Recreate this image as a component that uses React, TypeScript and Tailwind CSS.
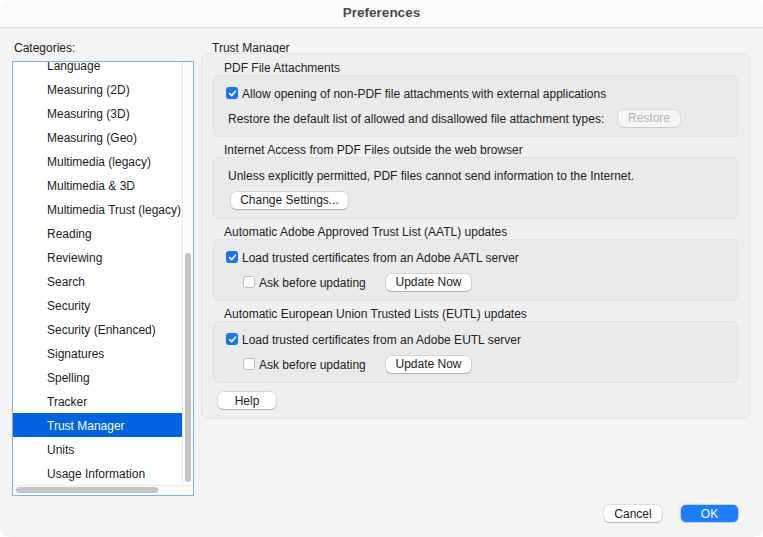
import React from 'react';

const categories = [
  'Language',
  'Measuring (2D)',
  'Measuring (3D)',
  'Measuring (Geo)',
  'Multimedia (legacy)',
  'Multimedia & 3D',
  'Multimedia Trust (legacy)',
  'Reading',
  'Reviewing',
  'Search',
  'Security',
  'Security (Enhanced)',
  'Signatures',
  'Spelling',
  'Tracker',
  'Trust Manager',
  'Units',
  'Usage Information',
];

const font = { fontFamily: '"Liberation Sans", Arial, sans-serif' };

const Checkbox: React.FC<{ checked?: boolean }> = ({ checked }) =>
  checked ? (
    <span className="w-[12px] h-[12px] rounded-[3px] bg-[#1a73f0] flex items-center justify-center shrink-0">
      <svg width="9" height="9" viewBox="0 0 10 10">
        <path d="M1.8 5.2 L4 7.4 L8.3 2.4" fill="none" stroke="white" strokeWidth="1.8" strokeLinecap="round" strokeLinejoin="round" />
      </svg>
    </span>
  ) : (
    <span className="w-[12px] h-[12px] rounded-[3px] bg-white border border-[#bdbdbd] shrink-0"></span>
  );

const Button: React.FC<{ label: string; w: string; disabled?: boolean; primary?: boolean }> = ({ label, w, disabled, primary }) => (
  <div
    className={`${w} h-[17px] rounded-[5px] flex items-center justify-center text-[12px] shrink-0 ${
      primary
        ? 'bg-[#1b7ffb] text-white shadow-[0_0_0_0.5px_rgba(0,80,200,0.4)]'
        : disabled
        ? 'bg-[#f6f6f6] text-[#b3b3b3] shadow-[0_0_0_0.5px_rgba(0,0,0,0.1),0_0.5px_1px_rgba(0,0,0,0.08)]'
        : 'bg-white text-[#222] shadow-[0_0_0_0.5px_rgba(0,0,0,0.18),0_1px_1px_rgba(0,0,0,0.18)]'
    }`}
  >
    {label}
  </div>
);

const Section: React.FC<{ title: string; children: React.ReactNode }> = ({ title, children }) => (
  <div className="flex flex-col">
    <div className="h-[20px] flex items-end pl-[11px]">
      <span className="leading-[13px] text-[12px] text-[#222]">{title}</span>
    </div>
    <div className="h-[62px] rounded-[6px] bg-[#eaeaea] border border-[#e2e2e2] flex flex-col pt-[7px] gap-[5px]">
      {children}
    </div>
  </div>
);

export default function App() {
  return (
    <div className="w-[763px] h-[537px] bg-white overflow-hidden" style={font}>
      <div className="w-full h-full rounded-[10px] bg-[#f4f4f4] flex flex-col overflow-hidden">
        {/* Title bar */}
        <div className="h-[28px] shrink-0 bg-[#fbfbfb] border-b border-[#dadada] flex items-center justify-center">
          <span className="text-[13.5px] font-bold text-[#4a4a4a]">Preferences</span>
        </div>

        {/* Body */}
        <div className="flex pl-[12px] gap-[7px]">
          {/* Categories */}
          <div className="w-[182px] flex flex-col pt-[13px]">
            <div className="h-[14px] leading-[14px] text-[12px] text-[#222] pl-[2px]">Categories:</div>
            <div className="mt-[6px] h-[435px] border border-[#86ade9] bg-white flex flex-col overflow-hidden">
              <div className="flex h-[423px]">
                <div className="flex-1 overflow-hidden">
                  <div className="mt-[-9px] flex flex-col">
                    {categories.map((c) => (
                      <div
                        key={c}
                        className={`h-[24px] shrink-0 flex items-center pt-[2px] pl-[34px] text-[12px] ${
                          c === 'Trust Manager' ? 'bg-[#0064e1] text-white' : 'text-[#1c1c1c]'
                        }`}
                      >
                        {c}
                      </div>
                    ))}
                  </div>
                </div>
                <div className="w-[11px] border-l border-[#ebebeb] bg-[#fbfbfb] pt-[191px] pl-[2px]">
                  <div className="w-[6px] h-[229px] rounded-full bg-[#c3c3c3]"></div>
                </div>
              </div>
              <div className="h-[10px] border-t border-[#ebebeb] bg-[#fbfbfb] pl-[3px] pt-[1px]">
                <div className="w-[142px] h-[6px] rounded-full bg-[#c3c3c3]"></div>
              </div>
            </div>
          </div>

          {/* Trust Manager panel */}
          <div className="w-[549px] flex flex-col pt-[13px]">
            <div className="h-[14px] leading-[14px] text-[12px] text-[#222] pl-[11px]">Trust Manager</div>
            <div className="mt-[-2px] h-[366px] rounded-[7px] bg-[#f0f0f0] border border-[#e4e4e4] px-[11px] pt-[1px] flex flex-col">
              <Section title="PDF File Attachments">
                <div className="h-[20px] flex items-center pl-[12px] gap-[4px] text-[12px] text-[#222]">
                  <Checkbox checked />
                  <span className="pt-[2px]">Allow opening of non-PDF file attachments with external applications</span>
                </div>
                <div className="h-[20px] flex items-center pl-[14px] text-[12px] text-[#222]">
                  <span className="w-[390px] pt-[2px]">Restore the default list of allowed and disallowed file attachment types:</span>
                  <Button label="Restore" w="w-[62px]" disabled />
                </div>
              </Section>
              <Section title="Internet Access from PDF Files outside the web browser">
                <div className="h-[20px] flex items-center pl-[14px] text-[12px] text-[#222]">
                  <span className="pt-[2px]">Unless explicitly permitted, PDF files cannot send information to the Internet.</span>
                </div>
                <div className="h-[20px] flex items-center pl-[17px]">
                  <Button label="Change Settings..." w="w-[117px]" />
                </div>
              </Section>
              <Section title="Automatic Adobe Approved Trust List (AATL) updates">
                <div className="h-[20px] flex items-center pl-[12px] gap-[4px] text-[12px] text-[#222]">
                  <Checkbox checked />
                  <span className="pt-[2px]">Load trusted certificates from an Adobe AATL server</span>
                </div>
                <div className="h-[20px] flex items-center pl-[29px] text-[12px] text-[#222]">
                  <Checkbox />
                  <span className="ml-[4px] w-[127px] pt-[2px]">Ask before updating</span>
                  <Button label="Update Now" w="w-[85px]" />
                </div>
              </Section>
              <Section title="Automatic European Union Trusted Lists (EUTL) updates">
                <div className="h-[20px] flex items-center pl-[12px] gap-[4px] text-[12px] text-[#222]">
                  <Checkbox checked />
                  <span className="pt-[2px]">Load trusted certificates from an Adobe EUTL server</span>
                </div>
                <div className="h-[20px] flex items-center pl-[29px] text-[12px] text-[#222]">
                  <Checkbox />
                  <span className="ml-[4px] w-[127px] pt-[2px]">Ask before updating</span>
                  <Button label="Update Now" w="w-[85px]" />
                </div>
              </Section>
              <div className="mt-[9px] pl-[5px]">
                <Button label="Help" w="w-[58px]" />
              </div>
            </div>
          </div>
        </div>

        {/* Footer */}
        <div className="mt-[9px] flex justify-end gap-[19px] pr-[25px]">
          <Button label="Cancel" w="w-[58px]" />
          <Button label="OK" w="w-[57px]" primary />
        </div>
      </div>
    </div>
  );
}
